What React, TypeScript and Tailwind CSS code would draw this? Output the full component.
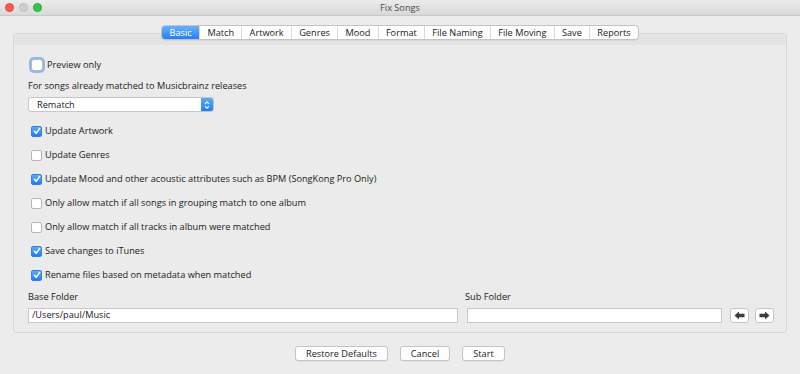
import React from "react";

const font = { fontFamily: '"Open Sans", "Liberation Sans", sans-serif' };

function Check({ checked, focus }: { checked?: boolean; focus?: boolean }) {
  if (checked) {
    return (
      <div className="w-[11px] h-[11px] rounded-[2px] bg-gradient-to-b from-[#5aa8fb] to-[#1b7ff7] border border-[#2a83ee] flex items-center justify-center shrink-0">
        <svg width="8" height="8" viewBox="0 0 8 8">
          <path d="M1.3 4.2 L3.2 6.2 L6.8 1.3" fill="none" stroke="white" strokeWidth="1.5" strokeLinecap="round" strokeLinejoin="round" />
        </svg>
      </div>
    );
  }
  if (focus) {
    return (
      <div className="w-[12px] h-[12px] rounded-[3px] bg-white border border-[#b8b8b8] shadow-[0_0_0_2px_#8bb9f3] shrink-0" />
    );
  }
  return <div className="w-[11px] h-[11px] rounded-[2px] bg-white border border-[#b5b5b5] shrink-0" />;
}

function Row({ label, checked }: { label: string; checked?: boolean }) {
  return (
    <div className="h-[24px] flex items-center gap-[3px] pl-[17px]">
      <Check checked={checked} />
      <span className="text-[9.2px] text-[#1a1a1a]">{label}</span>
    </div>
  );
}

function Arrow({ dir }: { dir: "left" | "right" }) {
  return (
    <div className="w-[19px] h-[15px] bg-white border border-[#c6c6c6] rounded-[3px] flex items-center justify-center">
      <svg width="11" height="9" viewBox="0 0 11 9" style={{ transform: dir === "right" ? "scaleX(-1)" : undefined }}>
        <path d="M0.5 4.5 L5 0.5 L5 2.8 L10.5 2.8 L10.5 6.2 L5 6.2 L5 8.5 Z" fill="#3c3c3c" />
      </svg>
    </div>
  );
}

function Btn({ label, w }: { label: string; w: string }) {
  return (
    <div className={`${w} h-[15px] bg-white border border-[#c4c4c4] rounded-[3px] flex items-center justify-center text-[9.2px] text-[#1a1a1a] shadow-[0_0.5px_0_rgba(0,0,0,0.08)]`}>
      {label}
    </div>
  );
}

const tabs = ["Basic", "Match", "Artwork", "Genres", "Mood", "Format", "File Naming", "File Moving", "Save", "Reports"];

export default function App() {
  return (
    <div className="w-[800px] h-[374px] bg-[#ececec] flex flex-col" style={font}>
      {/* title bar */}
      <div className="h-[16px] bg-gradient-to-b from-[#ebebeb] to-[#d9d9d9] border-b border-[#c8c8c8] flex items-center relative">
        <div className="flex items-center gap-[5px] pl-[5px]">
          <div className="w-[9px] h-[9px] rounded-full bg-[#fc5b57] border border-[#e2463f]" />
          <div className="w-[9px] h-[9px] rounded-full bg-[#cfcfcf] border border-[#bdbdbd]" />
          <div className="w-[9px] h-[9px] rounded-full bg-[#33c748] border border-[#27aa35]" />
        </div>
        <div className="flex-1 text-center text-[9.2px] text-[#4a4a4a] pr-[42px]">Fix Songs</div>
      </div>

      {/* tabs */}
      <div className="mt-[9px] flex justify-center relative z-10">
        <div className="flex h-[15px] bg-white border border-[#c3c3c3] rounded-[4px] overflow-hidden shadow-[0_0.5px_0_rgba(0,0,0,0.1)]">
          {tabs.map((t, i) => (
            <div
              key={t}
              className={
                i === 0
                  ? "px-[7.5px] flex items-center text-[9.2px] text-white bg-gradient-to-b from-[#68b0fb] to-[#1d80f8]"
                  : "px-[7.25px] flex items-center text-[9.2px] text-[#1a1a1a] border-l border-[#d8d8d8]"
              }
            >
              {t}
            </div>
          ))}
        </div>
      </div>

      {/* panel */}
      <div className="mx-[13px] -mt-[7px] h-[300px] border border-[#d6d6d6] rounded-[4px] bg-[#ebebeb] flex flex-col">
        <div className="h-[11px] bg-[#e3e3e3] rounded-t-[4px]" />
        <div className="h-[13px] mt-[13px] flex items-center gap-[4px] pl-[17px]">
          <Check focus />
          <span className="text-[9.2px] text-[#1a1a1a]">Preview only</span>
        </div>
        <div className="mt-[9px] pl-[14px] text-[9.2px] text-[#1a1a1a] leading-[12px]">
          For songs already matched to Musicbrainz releases
        </div>
        <div className="mt-[5px] ml-[14px] w-[186px] h-[15px] bg-white border border-[#c6c6c6] rounded-[3px] flex items-center overflow-hidden">
          <span className="flex-1 pl-[8px] text-[9.2px] text-[#1a1a1a]">Rematch</span>
          <div className="w-[12px] h-full bg-gradient-to-b from-[#5eaafa] to-[#1c7ef7] flex items-center justify-center">
            <svg width="6" height="10" viewBox="0 0 6 10">
              <path d="M1 3.8 L3 1.8 L5 3.8 M1 6.2 L3 8.2 L5 6.2" fill="none" stroke="white" strokeWidth="1.1" />
            </svg>
          </div>
        </div>
        <div className="mt-[7px] flex flex-col">
          <Row label="Update Artwork" checked />
          <Row label="Update Genres" />
          <Row label="Update Mood and other acoustic attributes such as BPM (SongKong Pro Only)" checked />
          <Row label="Only allow match if all songs in grouping match to one album" />
          <Row label="Only allow match if all tracks in album were matched" />
          <Row label="Save changes to iTunes" checked />
          <Row label="Rename files based on metadata when matched" checked />
        </div>
        <div className="mt-[3px] flex pl-[14px] text-[9.2px] text-[#1a1a1a]">
          <div className="w-[437px]">Base Folder</div>
          <div>Sub Folder</div>
        </div>
        <div className="mt-[4px] flex items-center pl-[14px]">
          <div className="w-[430px] h-[15px] bg-white border border-[#c8c8c8] flex items-center pl-[3px] text-[9.2px] text-[#1a1a1a]">
            /Users/paul/Music
          </div>
          <div className="ml-[9px] w-[255px] h-[15px] bg-white border border-[#c8c8c8]" />
          <div className="ml-[8px] flex gap-[6px]">
            <Arrow dir="left" />
            <Arrow dir="right" />
          </div>
        </div>
      </div>

      {/* buttons */}
      <div className="mt-[13px] flex justify-center gap-[12px]">
        <Btn label="Restore Defaults" w="w-[93px]" />
        <Btn label="Cancel" w="w-[50px]" />
        <Btn label="Start" w="w-[43px]" />
      </div>
    </div>
  );
}
